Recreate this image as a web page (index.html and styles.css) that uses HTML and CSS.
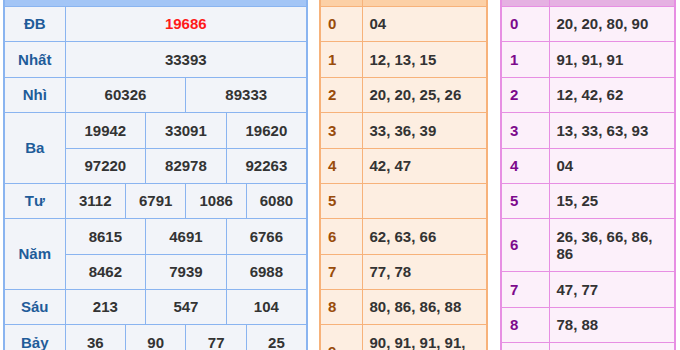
FILE: index.html
```html
<!DOCTYPE html>
<html lang="vi">
<head>
<meta charset="utf-8">
<title>Kết quả xổ số</title>
<link rel="stylesheet" href="styles.css">
</head>
<body>
<div class="wrap">
  <table class="kq">
    <colgroup><col class="c-label"><col span="12"></colgroup>
    <tr class="head"><th colspan="13"></th></tr>
    <tr><th>ĐB</th><td colspan="12" class="db">19686</td></tr>
    <tr><th>Nhất</th><td colspan="12">33393</td></tr>
    <tr><th>Nhì</th><td colspan="6">60326</td><td colspan="6">89333</td></tr>
    <tr><th rowspan="2">Ba</th><td colspan="4">19942</td><td colspan="4">33091</td><td colspan="4">19620</td></tr>
    <tr><td colspan="4">97220</td><td colspan="4">82978</td><td colspan="4">92263</td></tr>
    <tr><th>Tư</th><td colspan="3">3112</td><td colspan="3">6791</td><td colspan="3">1086</td><td colspan="3">6080</td></tr>
    <tr><th rowspan="2">Năm</th><td colspan="4">8615</td><td colspan="4">4691</td><td colspan="4">6766</td></tr>
    <tr><td colspan="4">8462</td><td colspan="4">7939</td><td colspan="4">6988</td></tr>
    <tr><th>Sáu</th><td colspan="4">213</td><td colspan="4">547</td><td colspan="4">104</td></tr>
    <tr><th>Bảy</th><td colspan="3">36</td><td colspan="3">90</td><td colspan="3">77</td><td colspan="3">25</td></tr>
  </table>

  <table class="lt head-tbl">
    <colgroup><col class="c-k1"><col></colgroup>
    <tr class="head"><th></th><th></th></tr>
    <tr><th>0</th><td>04</td></tr>
    <tr><th>1</th><td>12, 13, 15</td></tr>
    <tr><th>2</th><td>20, 20, 25, 26</td></tr>
    <tr><th>3</th><td>33, 36, 39</td></tr>
    <tr><th>4</th><td>42, 47</td></tr>
    <tr><th>5</th><td></td></tr>
    <tr><th>6</th><td>62, 63, 66</td></tr>
    <tr><th>7</th><td>77, 78</td></tr>
    <tr><th>8</th><td>80, 86, 86, 88</td></tr>
    <tr><th>9</th><td>90, 91, 91, 91, 93</td></tr>
  </table>

  <table class="lt tail-tbl">
    <colgroup><col class="c-k2"><col></colgroup>
    <tr class="head"><th></th><th></th></tr>
    <tr><th>0</th><td>20, 20, 80, 90</td></tr>
    <tr><th>1</th><td>91, 91, 91</td></tr>
    <tr><th>2</th><td>12, 42, 62</td></tr>
    <tr><th>3</th><td>13, 33, 63, 93</td></tr>
    <tr><th>4</th><td>04</td></tr>
    <tr><th>5</th><td>15, 25</td></tr>
    <tr><th>6</th><td>26, 36, 66, 86, 86</td></tr>
    <tr><th>7</th><td>47, 77</td></tr>
    <tr><th>8</th><td>78, 88</td></tr>
    <tr><th>9</th><td>39</td></tr>
  </table>
</div>
</body>
</html>
```

FILE: styles.css
```css
html, body {
  margin: 0;
  padding: 0;
  background: #fff;
  overflow: hidden;
}

.wrap {
  display: flex;
  align-items: flex-start;
  padding-left: 3px;
  font-family: "Liberation Sans", Arial, sans-serif;
  font-weight: bold;
  font-size: 15px;
  color: #333;
}

table {
  border-collapse: collapse;
  table-layout: fixed;
  flex: none;
}

td, th {
  padding: 8.4px 0;
  line-height: 17.6px;
  font-weight: bold;
  vertical-align: middle;
}

tr.head th {
  padding: 0;
  height: 6px;
  line-height: 0;
  border-top: 0;
}

/* Kết quả table */
.kq {
  width: 305px;
  background: #f2f4f9;
  border: 2px solid #8ab4f0;
  border-top: 0;
}
.kq td, .kq th {
  border: 1px solid #8ab4f0;
  text-align: center;
}
.kq th { color: #1f5c99; }
.kq tr.head th { background: #a3c5f6; }
.kq .c-label { width: 61px; }
.kq .db { color: #ff1a1a; }

/* Loto tables */
.lt td, .lt th {
  text-align: left;
  padding-left: 7px;
  padding-right: 7px;
}

.head-tbl {
  margin-left: 11px;
  width: 169px;
  background: #fdeee1;
  border: 2px solid #f7b27a;
  border-top: 0;
}
.head-tbl td, .head-tbl th { border: 1px solid #f7b27a; }
.head-tbl th { color: #994c0b; }
.head-tbl tr.head th { background: #fcd0a6; }
.head-tbl .c-k1 { width: 42px; }

.tail-tbl {
  margin-left: 12px;
  width: 176px;
  background: #fcf0fa;
  border: 2px solid #e78fe3;
  border-top: 0;
}
.tail-tbl td, .tail-tbl th { border: 1px solid #e78fe3; }
.tail-tbl th { color: #7d0a8c; padding-left: 8px; }
.tail-tbl tr.head th { background: #e5b1e2; }
.tail-tbl .c-k2 { width: 48px; }
```
